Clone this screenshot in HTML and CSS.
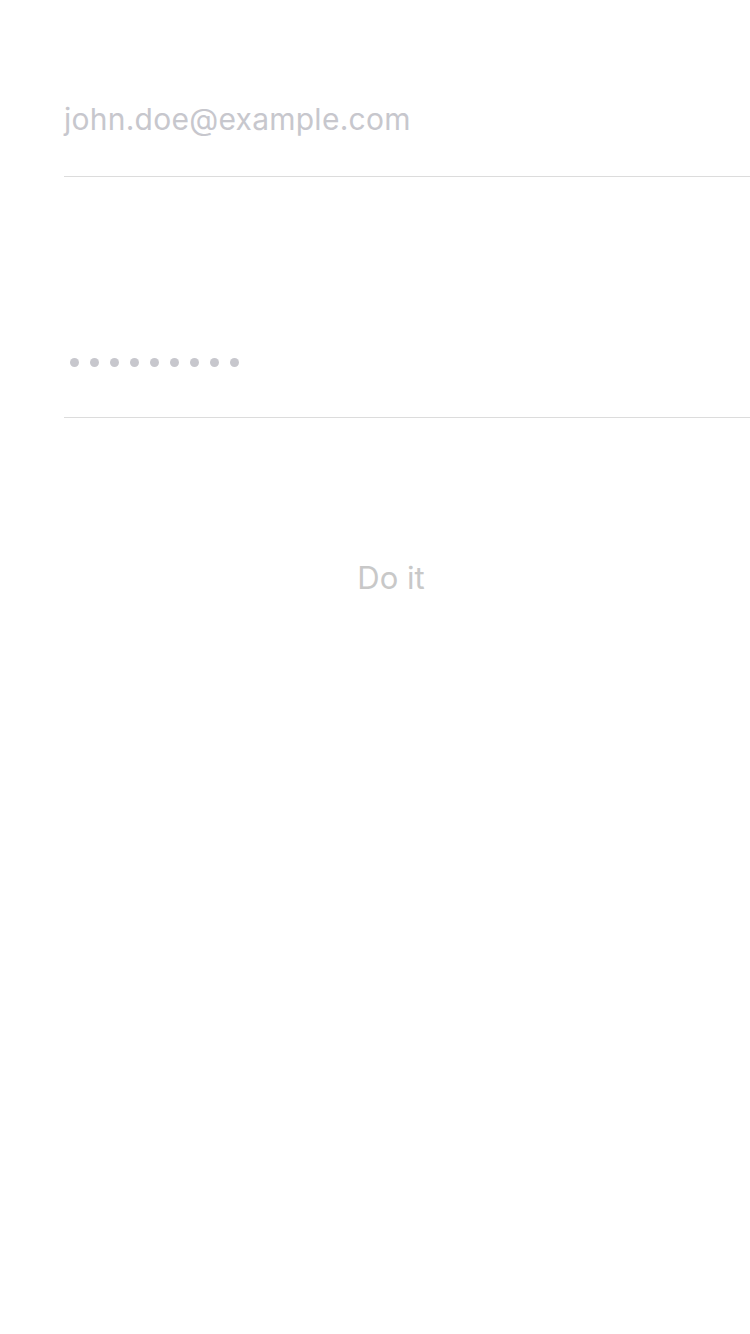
FILE: index.html
```html
<!DOCTYPE html>
<html>
<head>
<meta charset="utf-8">
<link rel="stylesheet" href="styles.css">
</head>
<body>
<div class="form">
  <div class="field field-email">
    <span class="placeholder">john.doe@example.com</span>
  </div>
  <div class="field field-password">
    <div class="dots">
      <span class="dot"></span><span class="dot"></span><span class="dot"></span>
      <span class="dot"></span><span class="dot"></span><span class="dot"></span>
      <span class="dot"></span><span class="dot"></span><span class="dot"></span>
    </div>
  </div>
</div>
<div class="action">
  <span class="btn">Do it</span>
</div>
</body>
</html>
```
FILE: styles.css
```css
html, body {
  margin: 0;
  padding: 0;
  background: #ffffff;
  width: 750px;
  height: 1334px;
  font-family: Inter, "Liberation Sans", sans-serif;
}
.form {
  margin-left: 64px;
}
.field {
  border-bottom: 1px solid #dcdcdc;
}
.field-email {
  padding-top: 100px;
  padding-bottom: 38px;
}
.placeholder {
  display: block;
  font-size: 30px;
  line-height: 38px;
  color: #c7c7cd;
  letter-spacing: 0.25px;
}
.field-password {
  padding-top: 181px;
  padding-bottom: 50px;
}
.dots {
  display: flex;
  gap: 11px;
  padding-left: 6px;
}
.dot {
  width: 9px;
  height: 9px;
  border-radius: 50%;
  background: #c7c7cd;
}
.action {
  padding-left: 32px;
  margin-top: 140px;
  text-align: center;
}
.btn {
  display: inline-block;
  font-size: 31px;
  line-height: 40px;
  color: #c8c8c8;
}
```
